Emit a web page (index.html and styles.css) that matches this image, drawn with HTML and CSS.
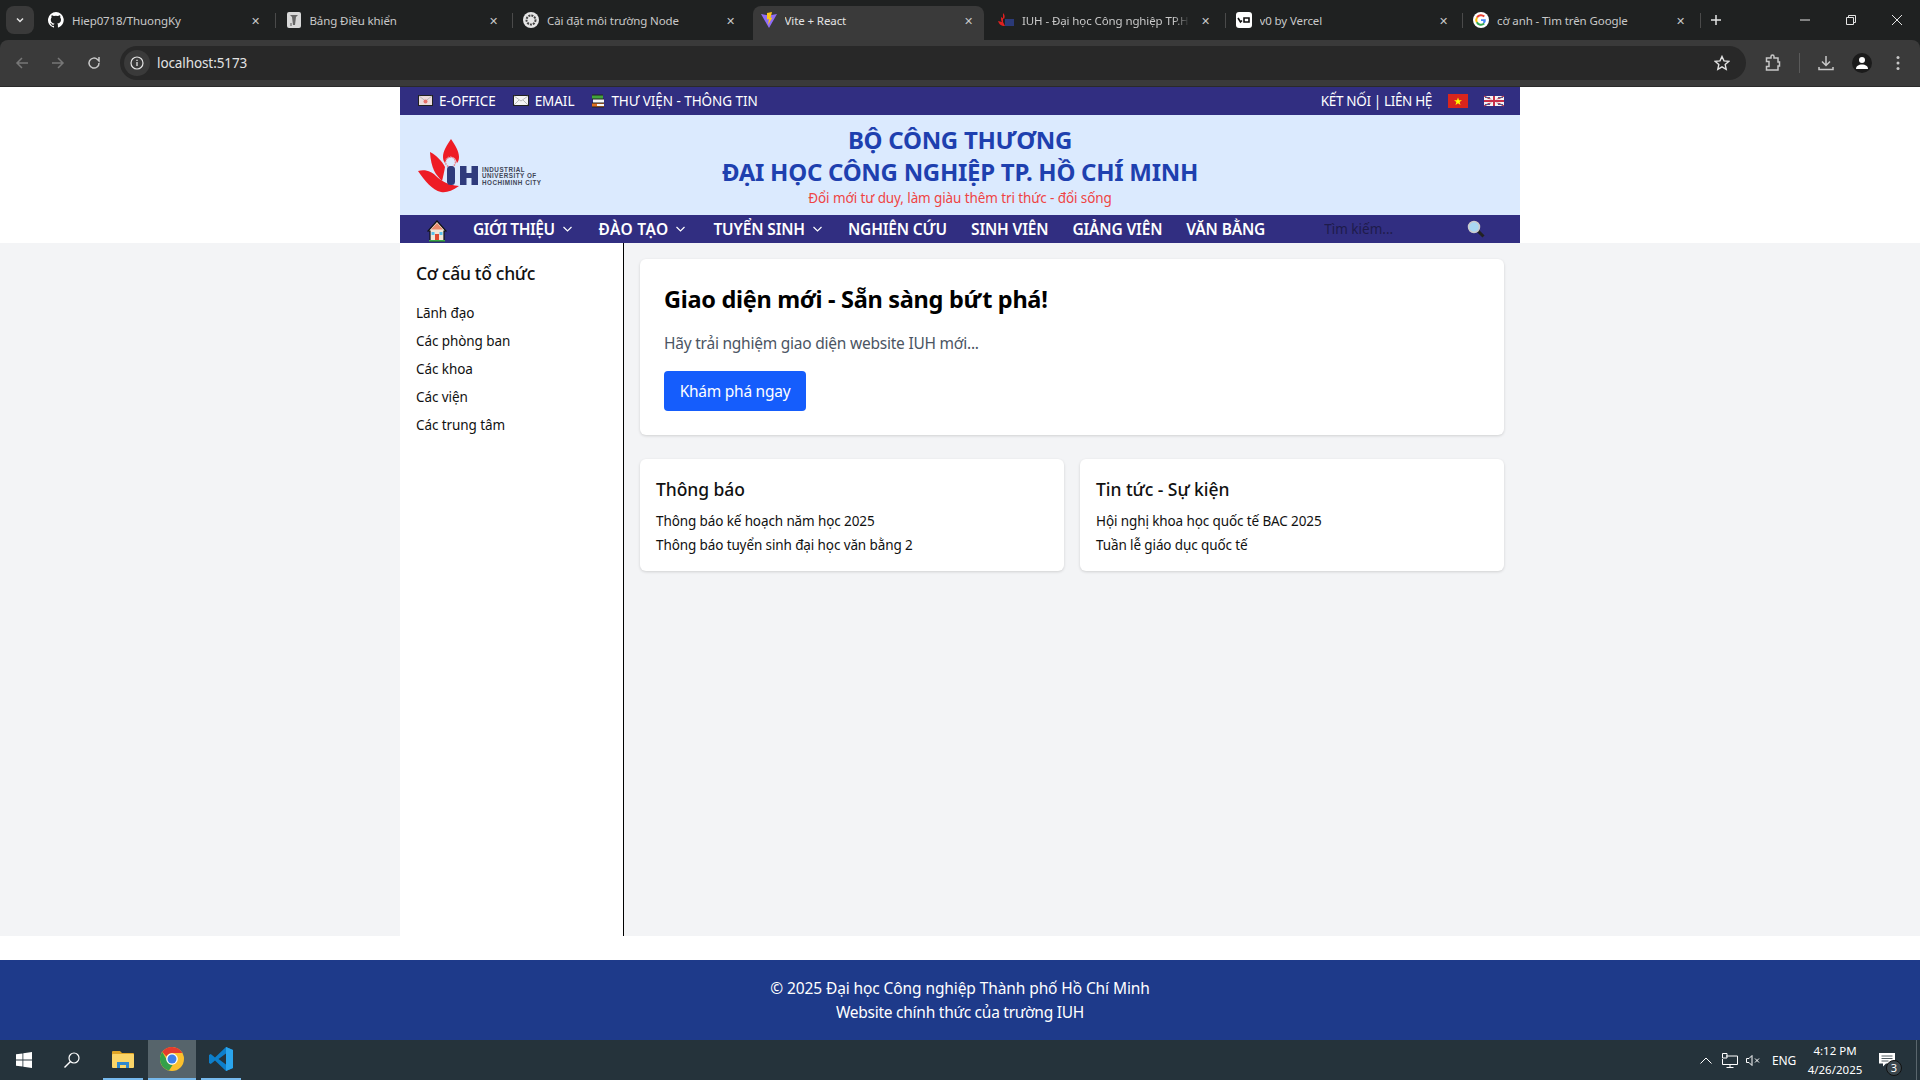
FILE: index.html
```html
<!DOCTYPE html>
<html lang="vi">
<head>
    <meta charset="UTF-8">
    <title>Vite + React</title>
    <link rel="stylesheet" href="styles.css">
</head>
<body>
    <!-- browser frame -->
    <div class="tabstrip">
        <div class="tab-menu">
            <svg width="10" height="10" viewBox="0 0 10 10"><path d="M2 3.500l3 3 3-3" fill="none" stroke="#e3e3e3" stroke-width="1.500"/></svg>
        </div>
        <div class="tab">
            <svg class="favicon" viewBox="0 0 16 16"><path fill="#fff" d="M8 0a8 8 0 0 0-2.500 15.600c.4.1.5-.2.5-.4v-1.400c-2.200.5-2.700-1-2.700-1-.4-.9-.9-1.200-.9-1.200-.7-.5.1-.5.1-.5.8.1 1.200.8 1.200.8.7 1.200 1.900.9 2.300.7.1-.5.3-.9.5-1.100-1.800-.2-3.700-.9-3.700-4 0-.9.3-1.600.8-2.100-.1-.2-.4-1 .1-2.100 0 0 .7-.2 2.200.8a7.600 7.600 0 0 1 4 0c1.500-1 2.200-.8 2.200-.8.4 1.100.2 1.900.1 2.100.5.6.8 1.300.8 2.100 0 3.100-1.900 3.700-3.700 3.900.3.3.6.8.6 1.500v2.200c0 .2.100.5.600.4A8 8 0 0 0 8 0z"/></svg>
            <span class="tab-title">Hiep0718/ThuongKy</span>
            <span class="tab-close">✕</span>
        </div>
        <div class="tab">
            <svg class="favicon" viewBox="0 0 16 16"><rect x="1" y="0" width="14" height="16" rx="2" fill="#d8d8d8"/><path d="M4 3l8 0-2 2-1 8H7L6 5z" fill="#666"/><rect x="4" y="11" width="2" height="3" fill="#999"/></svg>
            <span class="tab-title">Bảng Điều khiển</span>
            <span class="tab-close">✕</span>
        </div>
        <div class="tab">
            <svg class="favicon" viewBox="0 0 16 16"><circle cx="8" cy="8" r="8" fill="#e6e6e6"/><circle cx="8" cy="8" r="4.500" fill="none" stroke="#444" stroke-width="2" stroke-dasharray="2 1"/></svg>
            <span class="tab-title">Cài đặt môi trường Node</span>
            <span class="tab-close">✕</span>
        </div>
        <div class="tab tab-active">
            <svg class="favicon" viewBox="0 0 16 16"><path d="M0 2l8 1.500L16 2 8 16z" fill="#8f6cf6"/><path d="M6 1l5-1-1.500 6 2-.5L7 13l1-6-2 .5z" fill="#ffc517"/></svg>
            <span class="tab-title">Vite + React</span>
            <span class="tab-close">✕</span>
        </div>
        <div class="tab">
            <svg class="favicon" viewBox="0 0 16 16"><path d="M5 1c2 2 2 4 1 6L3 5c0 2 0 4 1 5L0 9c1 3 3 5 7 5L5 10z" fill="#e01f1f"/><rect x="7" y="7" width="9" height="7" fill="#2b3a78"/></svg>
            <span class="tab-title tab-cut">IUH - Đại học Công nghiệp TP.H</span>
            <span class="tab-close">✕</span>
        </div>
        <div class="tab">
            <svg class="favicon" viewBox="0 0 16 16"><rect width="16" height="16" rx="3" fill="#fff"/><path d="M2 6l2.500 4L6 8.500M8 6h5v4H8z" fill="none" stroke="#111" stroke-width="1.600"/></svg>
            <span class="tab-title">v0 by Vercel</span>
            <span class="tab-close">✕</span>
        </div>
        <div class="tab">
            <svg class="favicon" viewBox="0 0 16 16"><circle cx="8" cy="8" r="8" fill="#fff"/><path d="M4 5.500A4.800 4.800 0 0 1 11.300 4.500" fill="none" stroke="#ea4335" stroke-width="2"/><path d="M3.800 10.300a4.800 4.800 0 0 1 .2-4.800" fill="none" stroke="#fbbc05" stroke-width="2"/><path d="M11.200 11.600A4.800 4.800 0 0 1 3.800 10.300" fill="none" stroke="#34a853" stroke-width="2"/><path d="M8 7.200h4.800a4.800 4.800 0 0 1-1.600 4.400L9.800 10.200 10.500 9H8z" fill="#4285f4"/></svg>
            <span class="tab-title">cờ anh - Tìm trên Google</span>
            <span class="tab-close">✕</span>
        </div>
        <div class="tab-new">
            <svg width="12" height="12" viewBox="0 0 12 12"><path d="M6 1v10M1 6h10" stroke="#e3e3e3" stroke-width="1.500"/></svg>
        </div>
        <div class="win-buttons">
            <svg width="12" height="12" viewBox="0 0 12 12"><path d="M1 6h10" stroke="#e3e3e3"/></svg>
            <svg width="12" height="12" viewBox="0 0 12 12"><path d="M1.500 3.500h7v7h-7zM3.500 3.500v-2h7v7h-2" fill="none" stroke="#e3e3e3"/></svg>
            <svg width="12" height="12" viewBox="0 0 12 12"><path d="M1 1l10 10M11 1L1 11" stroke="#e3e3e3"/></svg>
        </div>
    </div>
    <div class="toolbar-wrap">
        <div class="toolbar">
            <div class="nav-btns">
                <svg width="16" height="16" viewBox="0 0 16 16"><path d="M14 8H3M8 3L3 8l5 5" fill="none" stroke="#777" stroke-width="1.500"/></svg>
                <svg width="16" height="16" viewBox="0 0 16 16"><path d="M2 8h11M8 3l5 5-5 5" fill="none" stroke="#777" stroke-width="1.500"/></svg>
                <svg width="16" height="16" viewBox="0 0 16 16"><path d="M13 8a5 5 0 1 1-1.500-3.500L13 6V2" fill="none" stroke="#c7c7c7" stroke-width="1.500"/></svg>
            </div>
            <div class="omnibox">
                <span class="site-info">
                    <svg width="14" height="14" viewBox="0 0 14 14"><circle cx="7" cy="7" r="6" fill="none" stroke="#e3e3e3" stroke-width="1.200"/><path d="M7 6v4M7 3.800v1.200" stroke="#e3e3e3" stroke-width="1.300"/></svg>
                </span>
                <span class="url">localhost:5173</span>
                <svg class="star" width="16" height="16" viewBox="0 0 16 16"><path d="M8 1.500l2 4.400 4.700.5-3.500 3.200 1 4.700L8 11.900l-4.200 2.400 1-4.700L1.300 6.400 6 5.900z" fill="none" stroke="#e3e3e3" stroke-width="1.400"/></svg>
            </div>
            <div class="tool-icons">
                <svg width="18" height="18" viewBox="0 0 18 18"><path d="M2.500 4H7V2.500a1.500 1.500 0 0 1 3 0V4h4v4h1.500v4H14v4H2.500v-3.500H5v-5H2.500z" fill="none" stroke="#c7c7c7" stroke-width="1.500"/></svg>
                <span class="tool-sep"></span>
                <svg width="16" height="16" viewBox="0 0 16 16"><path d="M8 1v9M4 6.500L8 10.500l4-4M1 12v2.500h14V12" fill="none" stroke="#c7c7c7" stroke-width="1.500"/></svg>
                <span class="profile">
                    <svg width="14" height="14" viewBox="0 0 14 14"><circle cx="7" cy="4" r="3" fill="#fff"/><path d="M1 13c0-3 2.500-4.500 6-4.500s6 1.500 6 4.500z" fill="#fff"/></svg>
                </span>
                <svg width="4" height="16" viewBox="0 0 4 16"><circle cx="2" cy="2.500" r="1.500" fill="#c7c7c7"/><circle cx="2" cy="8" r="1.500" fill="#c7c7c7"/><circle cx="2" cy="13.500" r="1.500" fill="#c7c7c7"/></svg>
            </div>
        </div>
    </div>

    <!-- page -->
    <div class="page">
        <div class="head-wrap">
            <div class="topbar">
                <div class="topbar-links">
                    <a class="topbar-link">
                        <svg width="15" height="11" viewBox="0 0 15 11"><rect x=".5" y=".5" width="14" height="10" fill="#ecdcdc" stroke="#222"/><path d="M1 1l6.500 5L14 1" fill="none" stroke="#bbb"/><circle cx="7.500" cy="6.500" r="2" fill="#e8706a"/></svg>
                        E-OFFICE
                    </a>
                    <a class="topbar-link">
                        <svg width="16" height="11" viewBox="0 0 16 11"><rect x=".5" y=".5" width="15" height="10" fill="#f4f4f4" stroke="#222"/><path d="M1 1l7 5 7-5M1 10l5-5M15 10l-5-5" fill="none" stroke="#bbb"/></svg>
                        EMAIL
                    </a>
                    <a class="topbar-link">
                        <svg width="14" height="14" viewBox="0 0 14 14"><rect x="1" y="1" width="11" height="4" fill="#41a53b"/><rect x="2" y="5" width="11" height="4" fill="#f5f5f5"/><rect x="1" y="9" width="12" height="4" fill="#e2701f"/><rect x="6" y="10" width="7" height="2" fill="#f5f5f5"/><path d="M1 1h11M1 5h12M1 9h12M1 13h12" stroke="#222"/></svg>
                        THƯ VIỆN - THÔNG TIN
                    </a>
                </div>
                <div class="topbar-right">
                    <span class="topbar-contact">KẾT NỐI | LIÊN HỆ</span>
                    <svg width="20" height="14" viewBox="0 0 20 14"><rect width="20" height="14" fill="#da251d"/><path d="M10 3.500l1 2.800h3l-2.400 1.700.9 2.900L10 9.200l-2.500 1.700.9-2.900L6 6.300h3z" fill="#ff0"/></svg>
                    <svg width="20" height="14" viewBox="0 0 20 14"><rect y="2" width="20" height="10" fill="#f4f4f4"/><path d="M0 2l20 10M20 2L0 12" stroke="#b7354a" stroke-width="1.300"/><path d="M10 2v10M0 7h20" stroke="#f4f4f4" stroke-width="3.600"/><path d="M10 2v10M0 7h20" stroke="#c8304a" stroke-width="2"/><path d="M1 3.500h5M14 3.500h5M1 10.500h5M14 10.500h5" stroke="#56568c" stroke-width="1.200"/></svg>
                </div>
            </div>
            <header class="site-header">
                <div class="logo">
                    <svg width="126" height="56" viewBox="0 0 126 56">
                        <path d="M33 0C37 6 41 12 41 18 41 21 40 23 39 24 38 20 36 18 33 18 30 18 28 20 27 24 26 23 25 21 25 18 25 12 29 6 33 0z" fill="#ee1c25"/>
                        <circle cx="32.500" cy="23" r="5" fill="none" stroke="#e8808a" stroke-width="1.500" stroke-dasharray="1.500 1"/>
                        <path d="M12 13C18 16 24 22 27 28 26 34 25 38 24 42 18 36 13 30 12 13z" fill="#ee1c25"/>
                        <path d="M0 32C8 30 14 33 18 37 23 42 30 46 41 47 34 52 28 54 23 53 14 51 7 42 0 32z" fill="#ee1c25"/>
                        <rect x="29" y="27" width="8" height="19" rx="3.500" fill="#2f3b7c"/>
                        <rect x="42" y="27" width="6.500" height="19" fill="#2f3b7c"/>
                        <rect x="53.500" y="27" width="6.500" height="19" fill="#2f3b7c"/>
                        <rect x="42" y="34" width="18" height="5" fill="#2f3b7c"/>
                        <text x="64" y="32.500" class="logo-text">INDUSTRIAL</text>
                        <text x="64" y="39" class="logo-text">UNIVERSITY OF</text>
                        <text x="64" y="45.500" class="logo-text">HOCHIMINH CITY</text>
                    </svg>
                </div>
                <div class="header-title">
                    <h1>BỘ CÔNG THƯƠNG</h1>
                    <h1>ĐẠI HỌC CÔNG NGHIỆP TP. HỒ CHÍ MINH</h1>
                    <p>Đổi mới tư duy, làm giàu thêm tri thức - đổi sống</p>
                </div>
            </header>
            <nav class="mainnav">
                <svg class="home-icon" width="20" height="22" viewBox="0 0 20 22">
                    <path d="M10 1L1 11h2v10h14V11h2z" fill="#f3e6d8" stroke="#111" stroke-width="1.200"/>
                    <path d="M10 3L4 9.500h12z" fill="#e98a6c"/>
                    <rect x="8" y="14" width="4" height="7" fill="#e2492f"/>
                    <rect x="4.500" y="12" width="3" height="3" fill="#58c2ee"/>
                    <rect x="12.500" y="12" width="3" height="3" fill="#58c2ee"/>
                    <rect x="2" y="20" width="16" height="1.500" fill="#3aa845"/>
                </svg>
                <a class="nav-item nav-item-tight">GIỚI THIỆU <svg class="chev" width="9" height="6" viewBox="0 0 9 6"><path d="M.5 1l4 4 4-4" fill="none" stroke="#fff" stroke-width="1.200"/></svg></a>
                <a class="nav-item nav-item-wide">ĐÀO TẠO <svg class="chev" width="9" height="6" viewBox="0 0 9 6"><path d="M.5 1l4 4 4-4" fill="none" stroke="#fff" stroke-width="1.200"/></svg></a>
                <a class="nav-item nav-item-last-drop">TUYỂN SINH <svg class="chev" width="9" height="6" viewBox="0 0 9 6"><path d="M.5 1l4 4 4-4" fill="none" stroke="#fff" stroke-width="1.200"/></svg></a>
                <a class="nav-item">NGHIÊN CỨU</a>
                <a class="nav-item">SINH VIÊN</a>
                <a class="nav-item">GIẢNG VIÊN</a>
                <a class="nav-item">VĂN BẰNG</a>
                <input class="search-input" type="text" placeholder="Tìm kiếm...">
                <svg class="search-icon" width="18" height="18" viewBox="0 0 18 18">
                    <line x1="10.500" y1="10.500" x2="16.500" y2="16.500" stroke="#222" stroke-width="3"/>
                    <circle cx="7" cy="7" r="5.500" fill="#a9d8f2" stroke="#ccc" stroke-width="1.500"/>
                </svg>
            </nav>
        </div>

        <div class="content-wrap">
            <div class="content">
                <aside class="sidebar">
                    <h3>Cơ cấu tổ chức</h3>
                    <ul>
                        <li>Lãnh đạo</li>
                        <li>Các phòng ban</li>
                        <li>Các khoa</li>
                        <li>Các viện</li>
                        <li>Các trung tâm</li>
                    </ul>
                </aside>
                <main class="main">
                    <section class="hero">
                        <h2>Giao diện mới - Sẵn sàng bứt phá!</h2>
                        <p>Hãy trải nghiệm giao diện website IUH mới...</p>
                        <button class="btn">Khám phá ngay</button>
                    </section>
                    <div class="cards">
                        <div class="card">
                            <h3>Thông báo</h3>
                            <ul>
                                <li>Thông báo kế hoạch năm học 2025</li>
                                <li>Thông báo tuyển sinh đại học văn bằng 2</li>
                            </ul>
                        </div>
                        <div class="card">
                            <h3>Tin tức - Sự kiện</h3>
                            <ul>
                                <li>Hội nghị khoa học quốc tế BAC 2025</li>
                                <li>Tuần lễ giáo dục quốc tế</li>
                            </ul>
                        </div>
                    </div>
                </main>
            </div>
        </div>

        <footer class="footer">
            <p>© 2025 Đại học Công nghiệp Thành phố Hồ Chí Minh</p>
            <p>Website chính thức của trường IUH</p>
        </footer>
    </div>

    <!-- windows taskbar -->
    <div class="taskbar">
        <div class="task-left">
            <svg class="win-logo" width="16" height="16" viewBox="0 0 16 16"><path d="M0 2.300l6.500-.9v6.200H0zM7.300 1.300L16 0v7.600H7.300zM0 8.400h6.500v6.200L0 13.700zM7.300 8.400H16V16l-8.700-1.200z" fill="#fff"/></svg>
            <svg class="search-task" width="16" height="16" viewBox="0 0 16 16"><circle cx="10" cy="6" r="5" fill="none" stroke="#fff" stroke-width="1.200"/><path d="M6.500 9.500L.5 15.500" stroke="#fff" stroke-width="1.400"/></svg>
            <div class="task-app">
                <svg width="22" height="18" viewBox="0 0 22 18"><path d="M0 2a1 1 0 0 1 1-1h7l2 2h11a1 1 0 0 1 1 1v2H0z" fill="#e0a526"/><rect y="4" width="22" height="14" rx="1" fill="#fbd568"/><path d="M5 18v-6h12v6h-3v-3H8v3z" fill="#2f88cf"/></svg>
            </div>
            <div class="task-app task-app-on">
                <svg width="24" height="24" viewBox="0 0 24 24"><circle cx="12" cy="12" r="12" fill="#fbc02d"/><path d="M12 0a12 12 0 0 1 10.400 6H12a6 6 0 0 0-5.500 3.600L2.300 4.900A12 12 0 0 1 12 0z" fill="#e33b2e"/><path d="M2.300 4.900l4.700 8.300a6 6 0 0 0 5.600 4.800L9 23.600A12 12 0 0 1 2.300 4.900z" fill="#34a04a"/><circle cx="12" cy="12" r="5.800" fill="#fff"/><circle cx="12" cy="12" r="4.500" fill="#3f7fe8"/></svg>
            </div>
            <div class="task-app">
                <svg width="24" height="24" viewBox="0 0 24 24"><path d="M17 0l7 3v18l-7 3L6 13.500 1.800 17 0 16V8l1.800-1L6 10.500z" fill="#0d7fcb"/><path d="M17 0l7 3v18l-7 3z" fill="#2aa5ed"/><path d="M17 6.500L9.500 12l7.500 5.500z" fill="#25333b"/></svg>
            </div>
        </div>
        <div class="tray">
            <svg width="12" height="7" viewBox="0 0 12 7"><path d="M.5 6.500L6 1l5.500 5.500" fill="none" stroke="#fff"/></svg>
            <svg width="16" height="15" viewBox="0 0 16 15"><path d="M4 3h11.500v8.500H.5V6M8 11.500v3M4.500 14.500h7M.5.500h4.500v4.500H.5z" fill="none" stroke="#fff"/></svg>
            <svg width="14" height="13" viewBox="0 0 14 13"><path d="M.5 4.500h2.500L6 1.500v10l-3-3H.5zM9 4.500l4 4M13 4.500l-4 4" fill="none" stroke="#fff"/></svg>
            <span class="tray-lang">ENG</span>
            <div class="clock">
                <span>4:12 PM</span>
                <span>4/26/2025</span>
            </div>
            <div class="notify">
                <svg width="16" height="14" viewBox="0 0 16 14"><path d="M0 0h16v10.500H7l-3 3v-3H0z" fill="#fff"/><path d="M2.500 3h11M2.500 5.500h11M2.500 8h7" stroke="#25333b" stroke-width=".8"/></svg>
                <span class="notify-badge">3</span>
            </div>
        </div>
    </div>
</body>
</html>
```

FILE: styles.css
```css
* {
    box-sizing: border-box;
}

html, body {
    margin: 0;
    padding: 0;
    height: 1080px;
    overflow: hidden;
}

body {
    display: flex;
    flex-direction: column;
    font-family: "Noto Sans", "Open Sans", sans-serif;
    background: #fff;
    color: #111;
}

h1, h2, h3, p, ul {
    margin: 0;
    padding: 0;
}

ul {
    list-style: none;
}

/* browser frame */
.tabstrip {
    height: 40px;
    flex: none;
    display: flex;
    background: #1f2121;
    padding-top: 6px;
    color: #e3e3e3;
}

.tab-menu {
    width: 28px;
    height: 28px;
    margin: 0 6px;
    background: #3a3a3a;
    border-radius: 8px;
    display: flex;
    align-items: center;
    justify-content: center;
}

.tab {
    width: 237.5px;
    height: 34px;
    padding: 0 14px 6px 8px;
    display: flex;
    align-items: center;
    gap: 8px;
    position: relative;
}

.tab::after {
    content: "";
    position: absolute;
    right: 2px;
    top: 7px;
    width: 1px;
    height: 15px;
    background: #4a4a4a;
}

.tab:has(+ .tab-active)::after,
.tab-active::after {
    display: none;
}

.tab:not(.tab-active) .tab-title {
    color: #c9c9c9;
}

.tab-active {
    width: 231.500px;
    margin-right: 6px;
    background: #3a3a3a;
    border-radius: 8px 8px 0 0;
    padding-right: 8px;
}

.favicon {
    width: 16px;
    height: 16px;
    flex: none;
}

.tab-title {
    flex: 1;
    min-width: 0;
    font-size: 11.500px;
    letter-spacing: -.1px;
    white-space: nowrap;
    overflow: hidden;
}

.tab-cut {
    -webkit-mask-image: linear-gradient(to right, #000 90%, transparent);
    mask-image: linear-gradient(to right, #000 90%, transparent);
}

.tab-close {
    font-size: 11px;
    width: 16px;
    flex: none;
    text-align: center;
    color: #c7c7c7;
}

.tab-new {
    width: 26px;
    height: 28px;
    display: flex;
    align-items: center;
    justify-content: center;
}

.win-buttons {
    margin-left: auto;
    display: flex;
    align-items: center;
    gap: 34px;
    padding: 0 17px 6px 0;
}

.toolbar-wrap {
    flex: none;
    background: #1f2121;
}

.toolbar {
    height: 47px;
    display: flex;
    align-items: center;
    background: #3a3a3a;
    border-radius: 8px 8px 0 0;
    border-bottom: 1px solid #2a2a2a;
    padding-bottom: 1px;
}

.nav-btns {
    display: flex;
    gap: 20px;
    width: 120px;
    padding-left: 14px;
}

.omnibox {
    width: 1626px;
    height: 34px;
    background: #282828;
    border-radius: 17px;
    display: flex;
    align-items: center;
    padding: 0 16px 0 4px;
}

.site-info {
    width: 26px;
    height: 26px;
    border-radius: 50%;
    background: #3a3a3a;
    display: flex;
    align-items: center;
    justify-content: center;
}

.url {
    font-size: 13.500px;
    letter-spacing: -.1px;
    color: #e3e3e3;
    margin-left: 7px;
}

.star {
    margin-left: auto;
}

.tool-icons {
    flex: 1;
    display: flex;
    align-items: center;
    padding-left: 18px;
}

.tool-sep {
    width: 1px;
    height: 20px;
    background: #5a5a5a;
    margin: 0 18px 0 17px;
}

.profile {
    width: 20px;
    height: 20px;
    border-radius: 50%;
    background: #1b1b1b;
    display: flex;
    align-items: center;
    justify-content: center;
    margin: 0 24px 0 18px;
}

/* page */
.page {
    flex: 1;
    display: flex;
    flex-direction: column;
    min-height: 0;
}

.head-wrap {
    width: 1120px;
    margin: 0 auto;
    flex: none;
}

.topbar {
    height: 28px;
    background: #312e81;
    color: #fff;
    font-size: 13.500px;
    display: flex;
    justify-content: space-between;
    align-items: center;
    padding: 0 16px 1px 18px;
}

.topbar-links {
    display: flex;
    gap: 17px;
}

.topbar-link {
    display: flex;
    align-items: center;
    gap: 6px;
    letter-spacing: -.05px;
}

.topbar-right {
    display: flex;
    align-items: center;
    gap: 16px;
}

.topbar-contact {
    letter-spacing: -.35px;
}

.site-header {
    height: 100px;
    background: #dbeafe;
    display: grid;
    grid-template-columns: 1fr auto 1fr;
    align-items: center;
    padding: 0 18px;
}

.logo {
    display: flex;
    align-items: center;
    padding-top: 4px;
}

.logo-text {
    font-family: "Liberation Sans", sans-serif;
    font-size: 6.300px;
    font-weight: 700;
    letter-spacing: .5px;
    fill: #3f4556;
}

.header-title {
    text-align: center;
    padding-top: 1px;
}

.header-title h1 {
    font-size: 24px;
    line-height: 32px;
    font-weight: 700;
    letter-spacing: -.28px;
    color: #1e40af;
    white-space: nowrap;
}

.header-title p {
    font-size: 13.500px;
    line-height: 20px;
    letter-spacing: -.1px;
    color: #ef4444;
}

.mainnav {
    height: 28px;
    background: #312e81;
    display: flex;
    align-items: center;
    padding-left: 27px;
    color: #fff;
}

.home-icon {
    margin-right: 26px;
    margin-top: 4px;
}

.nav-item {
    font-size: 15.500px;
    font-weight: 600;
    letter-spacing: -.15px;
    white-space: nowrap;
    margin-right: 24px;
    display: flex;
    align-items: center;
    gap: 8px;
}

.nav-item-tight {
    letter-spacing: -.45px;
    margin-right: 27px;
}

.nav-item-wide {
    letter-spacing: .35px;
    margin-right: 28px;
}

.nav-item-last-drop {
    margin-right: 26px;
}

.search-input {
    width: 140px;
    margin-left: 35px;
    background: transparent;
    border: none;
    outline: none;
    padding: 0;
    font-family: inherit;
    font-size: 13.500px;
    color: #1e1b4b;
}

.search-input::placeholder {
    color: #1e1b4b;
}

.search-icon {
    margin-left: 3px;
}

.content-wrap {
    height: 693px;
    flex: none;
    background: #f3f4f6;
}

.content {
    width: 1120px;
    height: 100%;
    margin: 0 auto;
    display: flex;
}

.sidebar {
    width: 224px;
    flex: none;
    background: #fff;
    border-right: 1px solid #000;
    padding: 16px;
}

.sidebar h3 {
    font-size: 17.500px;
    line-height: 28px;
    font-weight: 500;
    letter-spacing: -.3px;
    margin-bottom: 16px;
}

.sidebar li {
    font-size: 13.500px;
    line-height: 20px;
    letter-spacing: -.08px;
    margin-bottom: 8px;
}

.main {
    flex: 1;
    padding: 16px;
}

.hero {
    background: #fff;
    border-radius: 6px;
    box-shadow: 0 1px 3px rgba(0, 0, 0, .15);
    padding: 24px;
    margin-bottom: 24px;
}

.hero h2 {
    font-size: 23.500px;
    line-height: 33px;
    font-weight: 700;
    letter-spacing: -.3px;
    margin-bottom: 15px;
    color: #000;
}

.hero p {
    font-size: 15.500px;
    line-height: 24px;
    letter-spacing: -.23px;
    color: #4b5563;
    margin-bottom: 16px;
}

.btn {
    display: block;
    height: 40px;
    width: 142px;
    padding: 0;
    border: none;
    border-radius: 4px;
    background: #155dfc;
    color: #fff;
    font-family: inherit;
    font-size: 15.500px;
    letter-spacing: -.25px;
}

.cards {
    display: grid;
    grid-template-columns: 1fr 1fr;
    gap: 16px;
}

.card {
    height: 112px;
    background: #fff;
    border-radius: 6px;
    box-shadow: 0 1px 3px rgba(0, 0, 0, .15);
    padding: 16px;
}

.card h3 {
    font-size: 17.500px;
    line-height: 28px;
    font-weight: 500;
    letter-spacing: -.05px;
    margin-bottom: 8px;
}

.card li {
    font-size: 13.500px;
    line-height: 20px;
    letter-spacing: -.11px;
    margin-bottom: 4px;
}

.footer {
    margin-top: 24px;
    height: 80px;
    flex: none;
    background: #1e3a8a;
    color: #fff;
    font-size: 15.500px;
    line-height: 24px;
    letter-spacing: -.1px;
    text-align: center;
    padding-top: 16px;
}

.footer p + p {
    letter-spacing: -.25px;
}

/* windows taskbar */
.taskbar {
    height: 40px;
    flex: none;
    background: #25333b;
    display: flex;
    justify-content: space-between;
    color: #fff;
}

.task-left {
    display: flex;
    align-items: center;
}

.win-logo {
    margin-left: 16px;
}

.search-task {
    margin: 0 23px 0 32px;
}

.task-app {
    width: 40px;
    height: 40px;
    margin-right: 5px;
    display: flex;
    align-items: center;
    justify-content: center;
    border-bottom: 2px solid #76b9ed;
}

.task-app-on {
    width: 48px;
    background: #56646b;
}

.tray {
    display: flex;
    align-items: center;
    padding-right: 21px;
    margin-right: 3px;
    border-right: 1px solid #5a666d;
}

.tray svg {
    flex: none;
}

.tray > svg:nth-child(2) {
    margin: 0 8px 0 10px;
}

.tray-lang {
    font-size: 12px;
    letter-spacing: -.2px;
    margin: 0 8px 0 12px;
}

.clock {
    display: flex;
    flex-direction: column;
    align-items: center;
    font-size: 11.500px;
    line-height: 19px;
    width: 62px;
    margin-right: 13px;
}

.notify {
    position: relative;
    display: flex;
}

.notify-badge {
    position: absolute;
    left: 7px;
    top: 7px;
    width: 16px;
    height: 16px;
    border-radius: 50%;
    background: #3a464d;
    border: 1px solid #111;
    font-size: 11px;
    line-height: 14px;
    text-align: center;
}
```
